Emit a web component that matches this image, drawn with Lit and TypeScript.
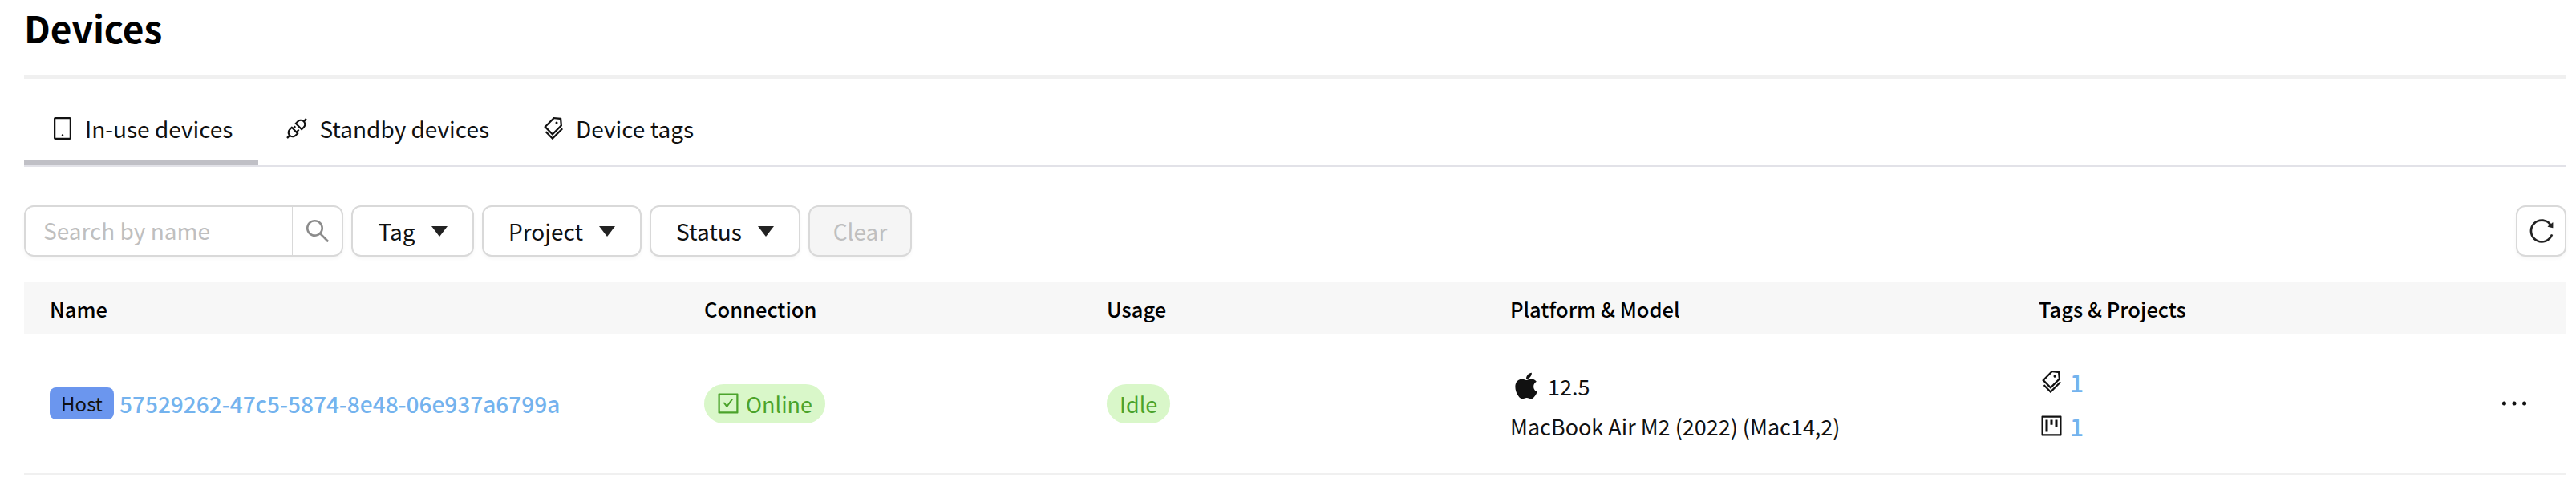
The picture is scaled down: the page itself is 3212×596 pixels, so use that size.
import {LitElement, html, css, svg} from 'lit';
import {customElement} from 'lit/decorators.js';

// ant design outlined icons, viewBox 0 0 1024 1024
const paths = {
  tablet: 'M800 64H224c-35.3 0-64 28.7-64 64v768c0 35.3 28.7 64 64 64h576c35.3 0 64-28.7 64-64V128c0-35.3-28.7-64-64-64zm-8 824H232V136h560v752zM472 784a40 40 0 1 0 80 0 40 40 0 1 0-80 0z',
  api: 'M917.7 148.8l-42.4-42.4c-1.6-1.6-3.6-2.3-5.7-2.3s-4.1.8-5.7 2.3l-76.1 76.1a199.27 199.27 0 0 0-112.1-34.3c-51.2 0-102.4 19.5-141.5 58.6L432.3 308.7a8.03 8.03 0 0 0 0 11.3L704 591.7c1.6 1.6 3.6 2.3 5.7 2.3 2 0 4.1-.8 5.7-2.3l101.9-101.9c68.9-69 77-175.7 24.3-253.5l76.1-76.1c3.1-3.2 3.1-8.3 0-11.4zM769.1 441.7l-59.4 59.4-186.8-186.8 59.4-59.4c24.9-24.9 58.1-38.7 93.4-38.7 35.3 0 68.4 13.7 93.4 38.7 24.9 24.9 38.7 58.1 38.7 93.4 0 35.3-13.8 68.4-38.7 93.4zm-190.2 105a8.03 8.03 0 0 0-11.3 0L501 613.3 410.7 523l66.7-66.7c3.1-3.1 3.1-8.2 0-11.3L441 408.6a8.03 8.03 0 0 0-11.3 0L363 475.3l-43-43a7.85 7.85 0 0 0-5.7-2.3c-2 0-4.1.8-5.7 2.3L206.8 534.2c-68.9 69-77 175.7-24.3 253.5l-76.1 76.1a8.03 8.03 0 0 0 0 11.3l42.4 42.4c1.6 1.6 3.6 2.3 5.7 2.3s4.1-.8 5.7-2.3l76.1-76.1c33.7 22.9 72.9 34.3 112.1 34.3 51.2 0 102.4-19.5 141.5-58.6l101.9-101.9c3.1-3.1 3.1-8.2 0-11.3l-43-43 66.7-66.7c3.1-3.1 3.1-8.2 0-11.3l-36.6-36.2zM441.7 769.1a131.32 131.32 0 0 1-93.4 38.7c-35.3 0-68.4-13.7-93.4-38.7a131.32 131.32 0 0 1-38.7-93.4c0-35.3 13.7-68.4 38.7-93.4l59.4-59.4 186.8 186.8-59.4 59.4z',
  tags: 'M483.2 790.3L861.4 412c1.7-1.7 2.5-4 2.3-6.3l-25.5-301.4c-.7-7.8-6.8-13.9-14.6-14.6L522.2 64.3c-2.3-.2-4.7.6-6.3 2.3L137.7 444.8a8.03 8.03 0 0 0 0 11.3l334.2 334.2c3.1 3.2 8.2 3.2 11.3 0zm62.6-651.7l224.6 19 19 224.6L477.5 694 233.9 450.5l311.9-311.9zm60.16 186.23a48 48 0 1 0 67.88-67.89 48 48 0 1 0-67.88 67.89zM889.7 539.8l-39.6-39.5a8.03 8.03 0 0 0-11.3 0l-362 361.3-237.6-237a8.03 8.03 0 0 0-11.3 0l-39.6 39.5a8.03 8.03 0 0 0 0 11.3l243.2 242.8 39.6 39.5c3.1 3.1 8.2 3.1 11.3 0l407.3-406.6c3.1-3.1 3.1-8.2 0-11.3z',
  project: 'M280 752h80c4.4 0 8-3.6 8-8V280c0-4.4-3.6-8-8-8h-80c-4.4 0-8 3.6-8 8v464c0 4.4 3.6 8 8 8zm192-280h80c4.4 0 8-3.6 8-8V280c0-4.4-3.6-8-8-8h-80c-4.4 0-8 3.6-8 8v184c0 4.4 3.6 8 8 8zm192 72h80c4.4 0 8-3.6 8-8V280c0-4.4-3.6-8-8-8h-80c-4.4 0-8 3.6-8 8v256c0 4.4 3.6 8 8 8zm216-432H144c-17.7 0-32 14.3-32 32v736c0 17.7 14.3 32 32 32h736c17.7 0 32-14.3 32-32V144c0-17.7-14.3-32-32-32zm-40 728H184V184h656v656z',
  check: 'M433.1 657.7a31.8 31.8 0 0 0 51.7 0l210.6-292c3.8-5.3 0-12.7-6.5-12.7H642c-10.2 0-19.9 4.9-25.9 13.3L459 584.3l-71.2-98.8c-6-8.3-15.6-13.3-25.9-13.3H315c-6.5 0-10.3 7.4-6.5 12.7l124.6 172.8zM880 112H144c-17.7 0-32 14.3-32 32v736c0 17.7 14.3 32 32 32h736c17.7 0 32-14.3 32-32V144c0-17.7-14.3-32-32-32zm-40 728H184V184h656v656z',
  search: 'M909.6 854.5L649.9 594.8C690.2 542.7 712 479 712 412c0-80.2-31.3-155.4-87.9-212.1-56.6-56.7-132-87.9-212.1-87.9s-155.5 31.3-212.1 87.9C143.2 256.5 112 331.8 112 412c0 80.1 31.3 155.5 87.9 212.1C256.5 680.8 331.8 712 412 712c67 0 130.6-21.8 182.7-62l259.7 259.6a8.2 8.2 0 0 0 11.6 0l43.6-43.5a8.2 8.2 0 0 0 0-11.6zM570.4 570.4C528 612.7 471.8 636 412 636s-116-23.3-158.4-65.6C211.3 528 188 471.8 188 412s23.3-116.1 65.6-158.4C296 211.3 352.2 188 412 188s116.1 23.2 158.4 65.6S636 352.2 636 412s-23.3 116.1-65.6 158.4z',
  reload: 'M909.1 209.3l-56.4 44.1C775.8 155.1 656.2 92 521.9 92 290 92 102.3 279.5 102 511.5 101.7 743.7 289.8 932 521.9 932c181.3 0 335.8-115 394.6-276.1 1.5-4.2-.7-8.9-4.9-10.3l-56.7-19.5a8 8 0 0 0-10.1 4.8c-1.8 5-3.8 10-5.9 14.9-17.3 41-42.1 77.8-73.7 109.4A344.77 344.77 0 0 1 655.9 829c-42.3 17.9-87.4 27-133.8 27-46.5 0-91.5-9.1-133.8-27A341.5 341.5 0 0 1 279 755.2a342.16 342.16 0 0 1-73.7-109.4c-17.9-42.4-27-87.4-27-133.9s9.1-91.5 27-133.9c17.3-41 42.1-77.8 73.7-109.4 31.6-31.6 68.4-56.4 109.3-73.8 42.3-17.9 87.4-27 133.8-27 46.5 0 91.5 9.1 133.8 27a341.5 341.5 0 0 1 109.3 73.8c9.9 9.9 19.2 20.4 27.8 31.4l-60.2 47a8 8 0 0 0 3 14.1l175.6 43c5 1.2 9.9-2.6 9.9-7.7l.8-180.9c-.1-6.6-7.8-10.3-13-6.2z',
  apple: 'M747.4 535.7c-.4-68.2 30.5-119.6 92.9-157.5-34.9-50-87.7-77.5-157.3-82.8-65.9-5.2-138 38.4-164.4 38.4-27.9 0-91.7-36.6-141.9-36.6C273.1 298.8 163 379.8 163 544.6c0 48.7 8.9 99 26.7 150.8 23.8 68.2 109.6 235.3 199.1 232.6 46.8-1.1 79.9-33.2 140.8-33.2 59.1 0 89.7 33.2 141.9 33.2 90.3-1.3 167.9-153.2 190.5-221.6-121.1-57.1-114.6-167.2-114.6-170.7zm-105.1-305c50.7-60.2 46.1-115 44.6-134.7-44.8 2.6-96.6 30.5-126.1 64.8-32.5 36.8-51.6 82.3-47.5 133.6 48.4 3.7 92.6-21.2 129-63.7z',
  more: 'M176 511a56 56 0 1 0 112 0 56 56 0 1 0-112 0zm280 0a56 56 0 1 0 112 0 56 56 0 1 0-112 0zm280 0a56 56 0 1 0 112 0 56 56 0 1 0-112 0z',
};

const icon = (name: keyof typeof paths, size: number) => html`<svg
  width=${size}
  height=${size}
  viewBox="0 0 1024 1024"
  fill="currentColor"
  class="icon"
>
  ${svg`<path d=${paths[name]}></path>`}
</svg>`;

const caret = html`<svg class="caret" width="20" height="13" viewBox="0 0 20 13">
  ${svg`<polygon points="0,0 20,0 10,13" fill="#222"></polygon>`}
</svg>`;

@customElement('app-root')
class AppRoot extends LitElement {
  static styles = css`
    :host {
      display: block;
      width: 3212px;
      height: 596px;
      box-sizing: border-box;
      padding: 0 12px 0 30px;
      background: #fff;
      color: #111;
      font-family: 'Noto Sans CJK SC', 'Noto Sans', sans-serif;
      font-size: 28px;
      overflow: hidden;
    }

    .icon {
      flex: none;
      display: block;
    }

    .title {
      height: 94px;
      margin: 0;
      font-size: 46px;
      font-weight: 700;
      line-height: 68px;
      color: #000;
    }

    .tabs {
      display: flex;
      height: 108px;
      border-top: 4px solid #f0f0f0;
      border-bottom: 2px solid #e2e2e8;
    }

    .tab {
      display: flex;
      align-items: center;
      gap: 12px;
      height: 100%;
      padding: 16px 32px 0;
      box-sizing: border-box;
    }

    .tab.active {
      box-shadow: inset 0 -6px 0 #c0c0c6;
    }

    .toolbar {
      display: flex;
      align-items: stretch;
      gap: 10px;
      height: 64px;
      margin-top: 48px;
    }

    .search {
      display: flex;
      width: 398px;
      box-sizing: border-box;
      border: 2px solid #d9d9d9;
      border-radius: 12px;
      box-shadow: 0 3px 4px rgba(0, 0, 0, 0.03);
    }

    .search .placeholder {
      flex: 1;
      padding-left: 22px;
      line-height: 58px;
      color: #bfbfbf;
    }

    .search .go {
      display: flex;
      align-items: center;
      justify-content: center;
      width: 61px;
      border-left: 1px solid #d9d9d9;
      color: #8c8c8c;
    }

    .btn {
      display: flex;
      align-items: center;
      justify-content: center;
      gap: 20px;
      box-sizing: border-box;
      border: 2px solid #d9d9d9;
      border-radius: 12px;
      background: #fff;
      box-shadow: 0 3px 4px rgba(0, 0, 0, 0.03);
    }

    .btn.tag {
      width: 153px;
    }
    .btn.project {
      width: 199px;
    }
    .btn.status {
      width: 188px;
    }
    .btn.clear {
      width: 129px;
      background: #f5f5f5;
      color: #bfbfbf;
    }
    .btn.refresh {
      width: 63px;
      margin-left: auto;
      color: #222;
    }

    .table {
      margin-top: 32px;
    }

    .row {
      display: grid;
      grid-template-columns: 816px 502px 503px 659px 1fr;
      align-items: center;
    }

    .head {
      height: 64px;
      background: #f7f7f7;
      font-size: 25.5px;
      font-weight: 500;
      color: #000;
    }

    .cell {
      padding-left: 32px;
    }

    .body {
      height: 174px;
      border-bottom: 2px solid #f0f0f0;
      font-size: 27px;
    }

    .name {
      display: flex;
      align-items: center;
      gap: 7px;
    }

    .host {
      width: 80px;
      height: 40px;
      border-radius: 8px;
      background: #6b96ee;
      font-size: 24px;
      line-height: 40px;
      text-align: center;
      color: #111;
    }

    a {
      color: #74b3ee;
      text-decoration: none;
    }

    .name a {
      font-size: 28px;
      font-weight: 500;
    }

    .pill {
      display: inline-flex;
      align-items: center;
      gap: 6px;
      height: 49px;
      padding: 0 16px;
      border-radius: 25px;
      background: #d9f7c9;
      color: #4ba32b;
    }

    .pill .icon {
      margin-left: -2px;
    }

    .stack {
      display: flex;
      flex-direction: column;
    }

    .platform {
      gap: 6px;
      padding-top: 6px;
    }

    .counts {
      gap: 11px;
    }

    .line {
      display: flex;
      align-items: center;
      gap: 7px;
      height: 44px;
    }

    .counts .line {
      gap: 7px;
    }

    .counts a {
      font-size: 30px;
      font-weight: 500;
    }

    .actions {
      display: flex;
      justify-content: space-between;
      align-items: center;
      padding-right: 42px;
    }
  `;

  render() {
    return html`
      <h1 class="title">Devices</h1>
      <div class="tabs">
        <div class="tab active">${icon('tablet', 32)}<span>In-use devices</span></div>
        <div class="tab">${icon('api', 32)}<span>Standby devices</span></div>
        <div class="tab">${icon('tags', 32)}<span>Device tags</span></div>
      </div>
      <div class="toolbar">
        <div class="search">
          <div class="placeholder">Search by name</div>
          <div class="go">${icon('search', 36)}</div>
        </div>
        <div class="btn tag"><span>Tag</span>${caret}</div>
        <div class="btn project"><span>Project</span>${caret}</div>
        <div class="btn status"><span>Status</span>${caret}</div>
        <div class="btn clear">Clear</div>
        <div class="btn refresh">${icon('reload', 36)}</div>
      </div>
      <div class="table">
        <div class="row head">
          <div class="cell">Name</div>
          <div class="cell">Connection</div>
          <div class="cell">Usage</div>
          <div class="cell">Platform &amp; Model</div>
          <div class="cell">Tags &amp; Projects</div>
        </div>
        <div class="row body">
          <div class="cell name">
            <span class="host">Host</span>
            <a href="#">57529262-47c5-5874-8e48-06e937a6799a</a>
          </div>
          <div class="cell"><span class="pill">${icon('check', 32)}Online</span></div>
          <div class="cell"><span class="pill">Idle</span></div>
          <div class="cell stack platform">
            <div class="line">${icon('apple', 40)}<span>12.5</span></div>
            <div class="line">MacBook Air M2 (2022) (Mac14,2)</div>
          </div>
          <div class="cell actions">
            <div class="stack counts">
              <div class="line">${icon('tags', 32)}<a href="#">1</a></div>
              <div class="line">${icon('project', 32)}<a href="#">1</a></div>
            </div>
            ${icon('more', 46)}
          </div>
        </div>
      </div>
    `;
  }
}
